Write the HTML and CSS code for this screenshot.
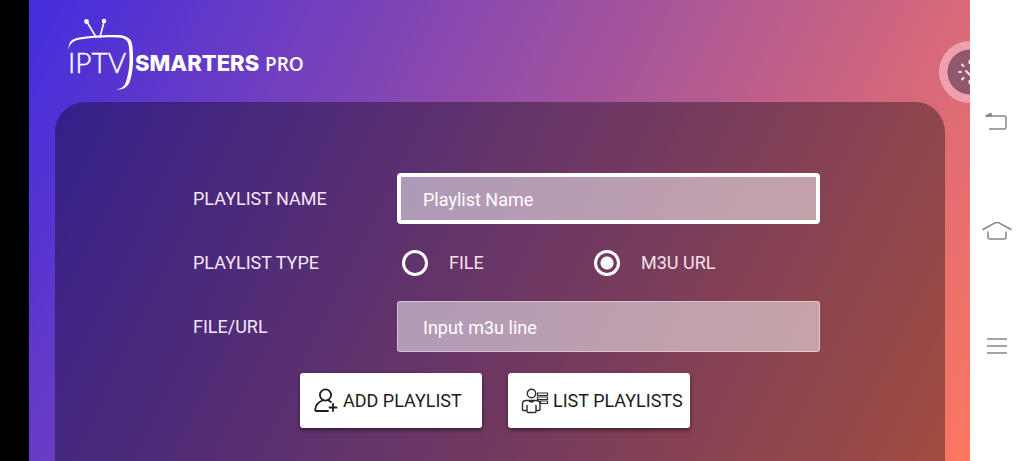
FILE: index.html
```html
<!DOCTYPE html>
<html lang="en">
<head>
<meta charset="utf-8">
<meta name="viewport" content="width=device-width, initial-scale=1">
<title>IPTV Smarters Pro</title>
<link rel="stylesheet" href="styles.css">
</head>
<body>
<div class="cutout"></div>
<main class="app">
  <header class="header">
    <svg class="logo" width="240" height="76" viewBox="0 0 240 76" role="img" aria-label="IPTV Smarters Pro">
      <g fill="none" stroke="#fff" stroke-linecap="round">
        <path d="M19 5 L28 20" stroke-width="1.6"/>
        <path d="M36 5 L32 20" stroke-width="1.6"/>
      </g>
      <g fill="#fff">
        <circle cx="18.500" cy="4.500" r="2.400"/>
        <circle cx="36" cy="4" r="2.200"/>
        <path d="M0.500 33 C0.500 25 3 22 11 20.500 C23 18.500 37 18 50 18 C60 18.500 64 22 64.500 30 C65.500 43 65.500 53 62 64 C60 70.500 55 73 48 72.500 C54 71.500 57 69 58.500 63 C62 51 62 43 61 31 C60.500 24 58 21 50 20.500 C37 20 24 20.500 12 22.500 C5 24 2 26 0.500 33Z"/>
      </g>
      <text class="logo-thin" x="0" y="56">IPTV</text>
      <text class="logo-bold" x="67" y="54">SMARTERS</text>
      <text class="logo-pro" x="197" y="54">PRO</text>
    </svg>
  </header>

  <form class="panel">
    <div class="row">
      <label class="label" for="name">PLAYLIST NAME</label>
      <input class="field field-active" id="name" type="text" placeholder="Playlist Name">
    </div>
    <div class="row" role="radiogroup" aria-labelledby="type">
      <span class="label" id="type">PLAYLIST TYPE</span>
      <div class="choices">
        <label class="choice"><input class="radio" type="radio" name="type">FILE</label>
        <label class="choice"><input class="radio" type="radio" name="type" checked>M3U URL</label>
      </div>
    </div>
    <div class="row">
      <label class="label" for="url">FILE/URL</label>
      <input class="field" id="url" type="text" placeholder="Input m3u line">
    </div>
    <div class="actions">
      <button class="button" type="button">
        <svg width="26" height="26" viewBox="0 0 26 26" fill="none" stroke="#1c1c1c" stroke-width="1.8" stroke-linecap="round" stroke-linejoin="round" aria-hidden="true">
          <circle cx="12.500" cy="7" r="5.600"/>
          <path d="M15 23 H3.500 Q2 23 2.200 21.500 C2.700 17 5.500 14 9.500 12.500 M15.500 12.500 L18 14 M20 16 V23 M16.500 19.500 H23.500"/>
        </svg>
        ADD PLAYLIST
      </button>
      <button class="button" type="button">
        <svg width="28" height="26" viewBox="0 0 28 26" fill="none" stroke="#2c2c2c" stroke-width="1.400" stroke-linejoin="round" aria-hidden="true">
          <circle cx="10.500" cy="5.500" r="4.200"/>
          <path d="M6 22.500 H2.500 Q1.500 22.500 1.500 21.500 V16 Q1.500 12.500 5 12.500 H15.500 Q19 12.500 19 16 V21.500 Q19 22.500 18 22.500 H15.500 M6 17 V23.500 Q6 24.500 7 24.500 H14 Q15 24.500 15 23.500 V17 M7.500 12.500 Q10.500 15.500 13.500 12.500"/>
          <path d="M16.500 5 H26.500 V7.500 H16.500Z M16.500 9 H26.500 V11.500 H16.500Z M19.500 13 H26.500 V15.500 H19.500Z" stroke-width="1.200"/>
        </svg>
        LIST PLAYLISTS
      </button>
    </div>
  </form>

  <div class="assist">
    <svg width="46" height="46" viewBox="0 0 46 46" fill="none" stroke="#f6e4ea" stroke-width="2" stroke-linecap="round" aria-hidden="true">
      <path d="M12 23 H14 M15 15.500 L16.500 17 M15 30.500 L16.500 29 M22.500 12 V14 M22.500 32 V34 M19 22 L23 26"/>
    </svg>
  </div>
</main>

<nav class="navbar">
  <button class="nav-button" type="button" aria-label="Back">
    <svg width="32" height="24" viewBox="0 0 32 24" fill="none" stroke="#858585" stroke-width="1.500" stroke-linejoin="round" aria-hidden="true">
      <path d="M5 6 H23 Q25 6 25 8 V17 Q25 19 23 19 H8"/><path d="M5 6 L10 3.500 V6Z" fill="#858585"/>
    </svg>
  </button>
  <button class="nav-button" type="button" aria-label="Home">
    <svg width="32" height="24" viewBox="0 0 32 24" fill="none" stroke="#858585" stroke-width="1.500" stroke-linecap="round" stroke-linejoin="round" aria-hidden="true">
      <path d="M2 7.500 L14 0.800 Q16 0 18 0.800 L30 7.500 M7 10 V15 Q7 17 9 17 H23 Q25 17 25 15 V10"/>
    </svg>
  </button>
  <button class="nav-button" type="button" aria-label="Recent apps">
    <svg width="32" height="24" viewBox="0 0 32 24" fill="none" stroke="#858585" stroke-width="1.600" aria-hidden="true">
      <path d="M6 5 H26 M6 12 H26 M6 19 H26"/>
    </svg>
  </button>
</nav>
</body>
</html>
```
FILE: styles.css
```css
* {
  box-sizing: border-box;
}

body {
  margin: 0;
  min-height: 100vh;
  display: flex;
  background: #fff;
  font-family: Roboto, "Liberation Sans", sans-serif;
  font-size: 18px;
  line-height: 24px;
}

.cutout {
  width: 29px;
  background: #000;
}

.app {
  flex: 1;
  position: relative;
  overflow: hidden;
  display: flex;
  flex-direction: column;
  padding: 0 25px 0 26px;
  background: linear-gradient(116deg, #432cde, #fc7860);
}

.header {
  padding: 17px 13px 9px;
}

.logo {
  display: block;
  fill: #fff;
}

.logo-thin {
  font: 300 28px Lato, sans-serif;
  stroke: #fff;
  stroke-width: 0.4px;
}

.logo-bold {
  font: 800 22px Inter, sans-serif;
}

.logo-pro {
  font: 600 19px "Open Sans", sans-serif;
}

.panel {
  flex: 1;
  display: flex;
  flex-direction: column;
  gap: 13px;
  padding: 71px 125px 32px 138px;
  border-radius: 30px 30px 0 0;
  background: rgba(0, 0, 0, 0.35);
}

.row {
  display: grid;
  grid-template-columns: 204px 1fr;
  align-items: center;
  min-height: 51px;
}

.label {
  color: #f6e6f8;
}

.field {
  width: 100%;
  height: 51px;
  padding: 1px 25px 0;
  border: 1px solid rgba(255, 255, 255, 0.4);
  border-radius: 3px;
  background: rgba(255, 255, 255, 0.51);
  color: #fff;
  font: inherit;
}

.field-active {
  padding: 1px 22px 0;
  border: 4px solid #fff;
  border-radius: 4px;
}

.field::placeholder {
  color: #fff;
  opacity: 1;
}

.choices {
  display: grid;
  grid-template-columns: 192px 1fr;
  padding-left: 5px;
}

.choice {
  display: flex;
  align-items: center;
  gap: 21px;
  color: #f6e0ee;
}

.radio {
  appearance: none;
  width: 26px;
  height: 26px;
  margin: 0;
  border: 3px solid #fff;
  border-radius: 50%;
}

.radio:checked {
  background: radial-gradient(circle, #fff 6px, transparent 7px);
}

.actions {
  display: flex;
  justify-content: center;
  gap: 26px;
  margin: 8px 23px 0 0;
}

.button {
  display: flex;
  align-items: center;
  gap: 4px;
  width: 182px;
  height: 55px;
  padding: 0 0 0 13px;
  border: 0;
  border-radius: 3px;
  background: #fff;
  box-shadow: 0 2px 4px rgba(0, 0, 0, 0.5);
  color: #1c1c1c;
  font: inherit;
  white-space: nowrap;
}

.assist {
  position: absolute;
  top: 41px;
  right: -31px;
  display: flex;
  padding: 8px;
  border-radius: 50%;
  background: radial-gradient(circle, #93576b 22px, #eea0b0 23px);
}

.navbar {
  display: flex;
  flex-direction: column;
  align-items: center;
  gap: 88px;
  width: 54px;
  padding-top: 110px;
}

.nav-button {
  display: flex;
  padding: 0;
  border: 0;
  background: none;
}
```
